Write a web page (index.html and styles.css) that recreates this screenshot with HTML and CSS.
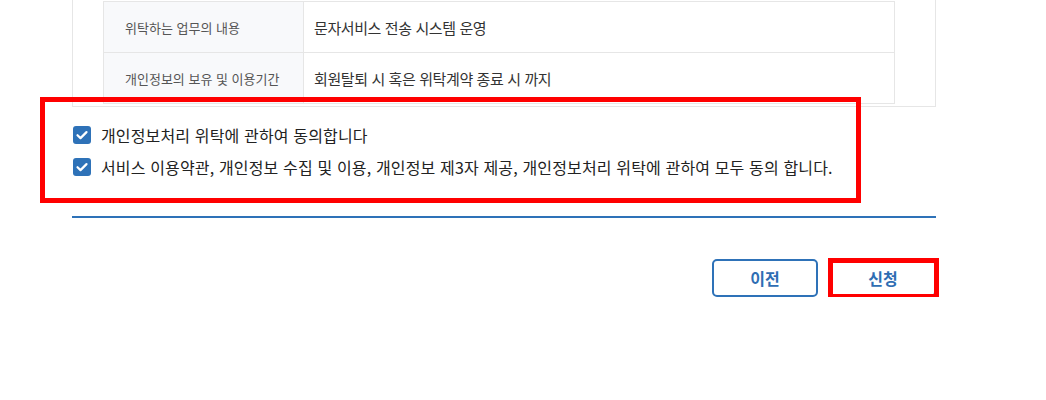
FILE: index.html
```html
<!DOCTYPE html>
<html lang="ko">

<head>
    <meta charset="UTF-8">
    <meta name="viewport" content="width=device-width, initial-scale=1.0">
    <title>약관동의</title>
    <link rel="stylesheet" href="styles.css">
</head>

<body>
    <div class="page">
        <div class="termsbox">
            <table class="info">
                <tr>
                    <th>위탁하는 업무의 내용</th>
                    <td>문자서비스 전송 시스템 운영</td>
                </tr>
                <tr>
                    <th>개인정보의 보유 및 이용기간</th>
                    <td>회원탈퇴 시 혹은 위탁계약 종료 시 까지</td>
                </tr>
            </table>
        </div>

        <div class="agree">
            <label class="check">
                <span class="box"><svg viewBox="0 0 18 18" width="18" height="18"><path d="M4.5 9.2l3 2.9 6-6" fill="none" stroke="#fff" stroke-width="2.2" stroke-linecap="round" stroke-linejoin="round"/></svg></span>
                개인정보처리 위탁에 관하여 동의합니다
            </label>
            <label class="check">
                <span class="box"><svg viewBox="0 0 18 18" width="18" height="18"><path d="M4.5 9.2l3 2.9 6-6" fill="none" stroke="#fff" stroke-width="2.2" stroke-linecap="round" stroke-linejoin="round"/></svg></span>
                서비스 이용약관, 개인정보 수집 및 이용, 개인정보 제3자 제공, 개인정보처리 위탁에 관하여 모두 동의 합니다.
            </label>
            <div class="mark mark-agree"></div>
        </div>

        <div class="btns">
            <div class="btn">이전</div>
            <div class="btn submit">신청
                <div class="mark mark-btn"></div>
            </div>
        </div>
    </div>
</body>

</html>
```

FILE: styles.css
```css
body {
    margin: 0;
    background: #fff;
    font-family: "Noto Sans CJK KR", "Noto Sans", sans-serif;
    color: #222;
}

.page {
    width: 864px;
    margin-left: 72px;
}

.termsbox {
    border: 1px solid #e6e6e6;
    border-top: none;
    padding: 1px 40px 2px 30px;
}

.info {
    width: 100%;
    border-collapse: collapse;
}

.info th,
.info td {
    border: 1px solid #e6e6e6;
    height: 50px;
    text-align: left;
    padding: 0;
}

.info th {
    width: 178px;
    padding-left: 21px;
    background-color: #f8f9fb;
    font-size: 13px;
    font-weight: normal;
    color: #555;
}

.info td {
    padding-left: 10px;
    font-size: 15px;
    letter-spacing: -0.4px;
    color: #333;
}

.agree {
    position: relative;
    padding: 16px 0 37px 1px;
    border-bottom: 2px solid #2e72b8;
    display: flex;
    flex-direction: column;
    gap: 8px;
}

.check {
    display: flex;
    align-items: center;
    gap: 10px;
    height: 24px;
    font-size: 16px;
    letter-spacing: 0.15px;
    color: #222;
}

.box {
    width: 18px;
    height: 18px;
    border-radius: 3px;
    background-color: #2e72b8;
    display: flex;
}

.btns {
    display: flex;
    justify-content: flex-end;
    gap: 12px;
    margin-top: 41px;
}

.btn {
    position: relative;
    width: 102px;
    height: 34px;
    border: 2px solid #2e72b8;
    border-radius: 5px;
    text-align: center;
    line-height: 34px;
    font-size: 16px;
    font-weight: bold;
    color: #2e6db3;
}

/* 빨간 표시 박스 */
.mark {
    position: absolute;
    border: 5px solid #f00;
    pointer-events: none;
}

.mark-agree {
    left: -32px;
    top: -10px;
    width: 811px;
    height: 96px;
}

.mark-btn {
    left: -4px;
    top: -3px;
    width: 101px;
    height: 31px;
}
```
